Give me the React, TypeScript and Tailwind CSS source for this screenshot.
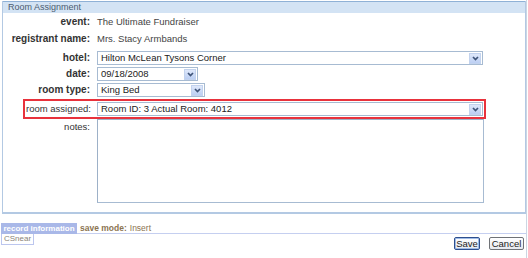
import React from "react";

const font = { fontFamily: '"Liberation Sans", Arial, sans-serif' };

function Chevron() {
  return (
    <svg width="7" height="5" viewBox="0 0 7 5" className="block">
      <path d="M1 1 L3.5 3.5 L6 1" fill="none" stroke="#3f5478" strokeWidth="1.7" />
    </svg>
  );
}

function Select({ value, width }: { value: string; width: string }) {
  return (
    <div className={`flex h-[14px] items-center justify-between border border-[#a7bbd2] bg-white pl-[3px] pr-px ${width}`}>
      <span className="whitespace-nowrap text-[9.5px] leading-none text-[#222]">{value}</span>
      <span className="flex h-[11px] w-[12px] items-center justify-center border border-[#c3d3ee] bg-gradient-to-b from-[#dfe8fa] to-[#bccff3]">
        <Chevron />
      </span>
    </div>
  );
}

function Row({ label, children, h }: { label: string; children: React.ReactNode; h: string }) {
  return (
    <div className={`flex items-center ${h}`}>
      <div className="w-[88px] whitespace-nowrap pr-px text-right text-[10px] font-bold leading-none text-[#333]">{label}</div>
      <div className="ml-[6px] flex items-center">{children}</div>
    </div>
  );
}

export default function App() {
  return (
    <div className="h-[258px] w-[527px] border-r border-[#ccd6e3] bg-white" style={font}>
      <div className="pl-[2px] pt-px">
        <div className="h-[213px] w-[524px] border-x border-b-2 border-[#b3c9e3]">
          <div className="flex h-[12px] items-center border-t border-[#8fb1d6] bg-[#d3e3f4] pl-[5px] text-[9px] leading-none text-[#4c5c70]">
            Room Assignment
          </div>
          <Row label="event:" h="h-[17px]">
            <span className="text-[9.5px] leading-none text-[#444]">The Ultimate Fundraiser</span>
          </Row>
          <Row label="registrant name:" h="h-[18px]">
            <span className="text-[9.5px] leading-none text-[#444]">Mrs. Stacy Armbands</span>
          </Row>
          <div className="h-[2px]" />
          <Row label="hotel:" h="h-[16px]">
            <Select value="Hilton McLean Tysons Corner" width="w-[386px]" />
          </Row>
          <Row label="date:" h="h-[16px]">
            <Select value="09/18/2008" width="w-[101px]" />
          </Row>
          <Row label="room type:" h="h-[16px]">
            <Select value="King Bed" width="w-[108px]" />
          </Row>
          <div className="ml-[20px] mt-px flex h-[20px] w-[463px] items-center border-2 border-[#e8323c]">
            <div className="w-[66px] whitespace-nowrap text-right text-[9.5px] leading-none text-[#333]">room assigned:</div>
            <div className="ml-[6px]">
              <Select value="Room ID: 3 Actual Room: 4012" width="w-[386px]" />
            </div>
          </div>
          <div className="flex">
            <div className="w-[88px] pr-px pt-[3px] text-right text-[9.5px] leading-none text-[#333]">notes:</div>
            <div className="ml-[6px] h-[84px] w-[387px] border border-[#a7bbd2] border-l-[#9db1c8] border-t-[#9db1c8] bg-white" />
          </div>
        </div>
      </div>
      <div className="mt-[9px] flex items-end pl-px">
        <div className="flex h-[11px] w-[76px] items-center justify-center whitespace-nowrap bg-[#a9b8e8] text-[8px] font-bold leading-none text-white">
          record information
        </div>
        <div className="flex h-[11px] flex-1 items-center whitespace-nowrap border-b border-[#c5cff0] pl-[3px] text-[8.5px] leading-none text-[#8b7452]">
          <span className="font-bold">save mode:</span>
          <span className="ml-[3px]">Insert</span>
        </div>
      </div>
      <div className="flex items-start justify-between pl-px">
        <div className="flex h-[11px] items-center whitespace-nowrap border-x border-b border-[#bcc6ee] px-[2px] text-[8px] leading-none text-[#8a8478]">
          CSnear
        </div>
        <div className="mr-[2px] mt-[3px] flex gap-[9px]">
          <button className="flex h-[13px] w-[26px] items-center justify-center rounded-[2px] border border-[#2d4f8f] bg-gradient-to-b from-white to-[#e6e9ef] text-[9.5px] leading-none text-[#222] shadow-[inset_0_0_0_1px_#9fbbe6]">
            Save
          </button>
          <button className="flex h-[13px] w-[35px] items-center justify-center rounded-[2px] border border-[#6f7277] bg-gradient-to-b from-white to-[#e6e9ef] text-[9.5px] leading-none text-[#222]">
            Cancel
          </button>
        </div>
      </div>
    </div>
  );
}
